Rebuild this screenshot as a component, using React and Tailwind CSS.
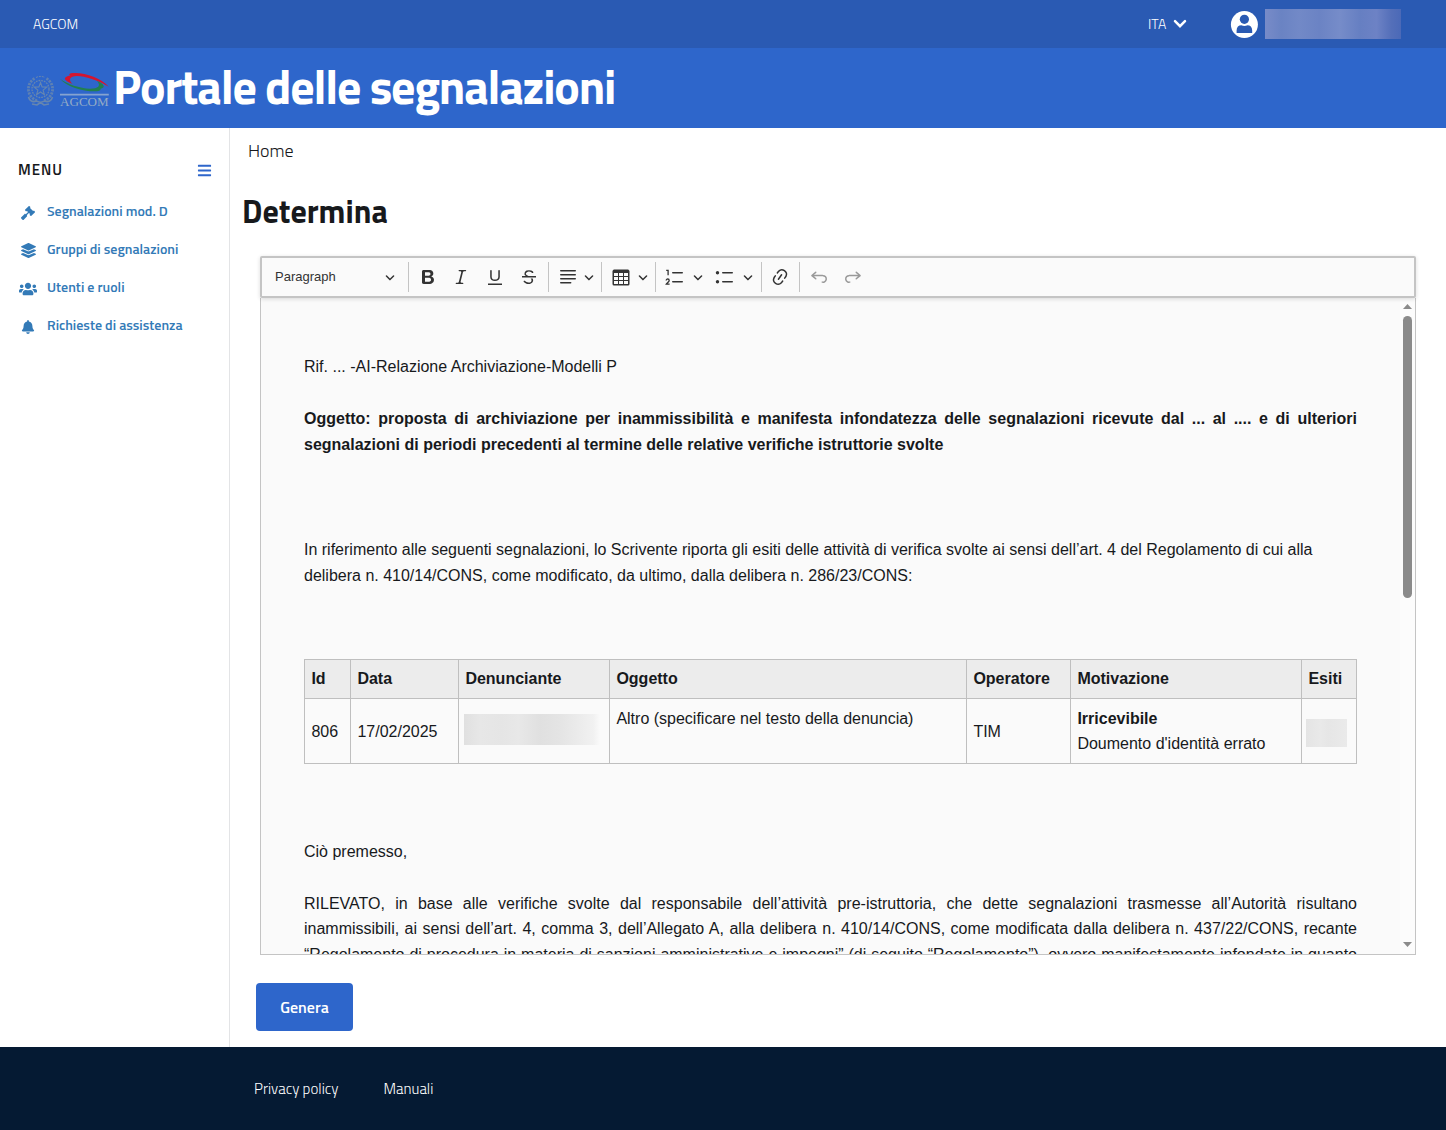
import { FaGavel, FaLayerGroup, FaUsers, FaBell, FaBars } from "react-icons/fa";

const Icon = ({ d, className = "", size = 20, children }) => (
  <svg viewBox={`0 0 ${size} ${size}`} width={size} height={size} fill="currentColor" className={`block shrink-0 ${className}`}>
    {d && <path d={d} />}
    {children}
  </svg>
);

const Arrow = ({ className }) => (
  <Icon
    size={10}
    className={className}
    d="M.941 4.523a.75.75 0 1 1 1.06-1.06l3.006 3.005 3.005-3.005a.75.75 0 1 1 1.06 1.06l-3.549 3.55a.75.75 0 0 1-1.168-.136z"
  />
);

const Sep = ({ className }) => <div className={`h-[30px] w-px shrink-0 bg-[#c4c4c4] ${className}`} />;

const bold =
  "M10.187 17H5.773c-.637 0-1.092-.138-1.364-.415-.273-.277-.409-.718-.409-1.323V4.738c0-.617.14-1.062.419-1.332.279-.27.73-.406 1.354-.406h4.68c.69 0 1.288.041 1.793.124.506.083.96.242 1.36.478.341.197.644.447.906.75a3.262 3.262 0 0 1 .808 2.162c0 1.401-.722 2.426-2.167 3.075C15.05 10.175 16 11.315 16 13.01a3.756 3.756 0 0 1-2.296 3.504 6.1 6.1 0 0 1-1.517.377c-.571.073-1.238.11-2 .11zm-.217-6.217H7v4.087h3.069c1.977 0 2.965-.69 2.965-2.072 0-.707-.256-1.22-.768-1.537-.512-.319-1.277-.478-2.296-.478zM7 5.13v3.619h2.606c.729 0 1.292-.067 1.69-.2a1.6 1.6 0 0 0 .91-.765c.165-.267.247-.566.247-.897 0-.707-.26-1.176-.778-1.409-.519-.232-1.31-.348-2.375-.348H7z";
const italic =
  "m9.586 14.633.021.004c-.036.335.095.655.393.962.082.083.173.15.274.201h1.474a.6.6 0 1 1 0 1.2H5.304a.6.6 0 0 1 0-1.2h1.15c.474-.07.809-.182 1.005-.334.157-.122.291-.32.404-.597l2.416-9.55a1.053 1.053 0 0 0-.281-.823 1.12 1.12 0 0 0-.442-.296H8.15a.6.6 0 0 1 0-1.2h6.443a.6.6 0 1 1 0 1.2h-1.195c-.376.056-.65.155-.823.296-.215.175-.423.439-.623.79l-2.366 9.347z";
const underline =
  "M3 18v-1.5h14V18zm2.2-8V3.6c0-.4.4-.6.8-.6.3 0 .7.2.7.6v6.2c0 2 1.3 2.8 3.2 2.8 1.9 0 3.4-.9 3.4-2.9V3.6c0-.3.4-.5.8-.5.3 0 .7.2.7.5V10c0 2.7-2.2 4-4.9 4-2.6 0-4.7-1.2-4.7-4z";
const strike =
  "M7 16.4c-.8-.4-1.5-.9-2.2-1.5a.6.6 0 0 1-.2-.5l.3-.6h1c1 1.2 2.1 1.7 3.7 1.7 1 0 1.8-.3 2.3-.6.6-.4.6-1.2.6-1.3.2-1.2-.9-2.1-.9-2.1h2.1c.3.7.4 1.2.4 1.7v.8l-.6 1.2c-.6.8-1.1 1-1.6 1.2a6 6 0 0 1-2.4.6c-1 0-1.8-.3-2.5-.6zM6.8 9 6 8.3c-.4-.5-.5-.8-.5-1.6 0-.7.1-1.3.5-1.8.4-.6 1-1 1.6-1.3a6.3 6.3 0 0 1 4.7 0 4 4 0 0 1 1.7 1l.3.7c0 .1.2.4-.2.7-.4.2-.9.1-1 0a3 3 0 0 0-1.2-1c-.4-.2-1-.3-2-.4-.7 0-1.4.2-2 .6-.8.6-1 .8-1 1.5 0 .8.5 1 1.2 1.5.6.4 1.1.7 1.9 1H6.8zM3 10.5V9h14v1.5z";
const align =
  "M2 3.75c0 .414.336.75.75.75h14.5a.75.75 0 1 0 0-1.5H2.75a.75.75 0 0 0-.75.75zm0 4c0 .414.336.75.75.75h14.5a.75.75 0 1 0 0-1.5H2.75a.75.75 0 0 0-.75.75zm0 4c0 .414.336.75.75.75h14.5a.75.75 0 1 0 0-1.5H2.75a.75.75 0 0 0-.75.75zm0 4c0 .414.336.75.75.75h9.929a.75.75 0 1 0 0-1.5H2.75a.75.75 0 0 0-.75.75z";
const tableIcon =
  "M3 6v3h4V6H3zm0 4v3h4v-3H3zm0 4v3h4v-3H3zm5 3h4v-3H8v3zm5 0h4v-3h-4v3zm4-4v-3h-4v3h4zm0-4V6h-4v3h4zm1.5 8a1.5 1.5 0 0 1-1.5 1.5H3A1.5 1.5 0 0 1 1.5 17V4c.222-.863 1.068-1.5 2-1.5h13c.932 0 1.778.637 2 1.5v13zM12 13v-3H8v3h4zm0-4V6H8v3h4z";
const lines =
  "M7 5.75c0 .414.336.75.75.75h9.5a.75.75 0 1 0 0-1.5h-9.5a.75.75 0 0 0-.75.75zM7 14.75c0 .414.336.75.75.75h9.5a.75.75 0 1 0 0-1.5h-9.5a.75.75 0 0 0-.75.75z";
const link =
  "m11.077 15 .991-1.416a.75.75 0 1 1 1.229.86l-1.148 1.64a.748.748 0 0 1-.217.206 5.251 5.251 0 0 1-8.503-5.955.741.741 0 0 1 .12-.274l1.147-1.639a.75.75 0 1 1 1.228.86L4.933 10.7l.006.003a3.75 3.75 0 0 0 6.132 4.294l.006.004zm5.494-5.335a.748.748 0 0 1-.12.274l-1.147 1.639a.75.75 0 1 1-1.228-.86l.86-1.23a3.75 3.75 0 0 0-6.144-4.301l-.86 1.229a.75.75 0 0 1-1.229-.86l1.148-1.64a.748.748 0 0 1 .217-.206 5.251 5.251 0 0 1 8.503 5.955zm-4.563-2.532a.75.75 0 0 1 .184 1.045l-3.155 4.505a.75.75 0 1 1-1.229-.86l3.155-4.506a.75.75 0 0 1 1.045-.184z";
const undo =
  "m5.042 9.367 2.189 1.837a.75.75 0 0 1-.965 1.149l-3.788-3.18a.747.747 0 0 1-.21-.284.75.75 0 0 1 .17-.945L6.23 4.762a.75.75 0 1 1 .964 1.15L4.863 7.866h8.917A.75.75 0 0 1 14 7.9a4 4 0 1 1-1.477 7.718l.344-1.489a2.5 2.5 0 1 0 1.094-4.73l.008-.032H5.042z";

function Logo() {
  return (
    <svg width="84" height="38" viewBox="0 0 84 38" className="block shrink-0">
      <g fill="none" stroke="#6686b0">
        <circle cx="13.5" cy="18" r="8.500" strokeWidth="1.300" strokeDasharray="1.800 .9" />
        <path d="M10 29.500A12 12 0 0 1 8 7.300M17 29.500A12 12 0 0 0 19 7.300" strokeWidth="2.800" strokeDasharray="2.200 1" opacity=".85" />
        <path d="M9 6.500c3-1.500 6-1.500 9 0" strokeWidth="1" strokeDasharray="2 1" />
        <path d="m13.500 11.500 1.600 4.400 4.800.2-3.800 3 1.300 4.500-3.900-2.600-3.900 2.600 1.300-4.500-3.800-3 4.800-.2z" strokeWidth="1.100" />
        <path d="M1.500 26c1 4 4 5.500 8 4l4 1.500 4-1.500c4 1.500 7 0 8-4M5 33l5 1 3.500-2.500L17 34l5-1" strokeWidth="1.600" />
      </g>
      <path d="M45.500 13C36 9.500 35.500 6 43.500 4.600 41.500 3.600 42 2.600 44 2.200 57 .8 73 6.500 81.900 15.700 71 9 58 4.900 50 4.900c-7.500.4-9 3.600-4.500 8.100z" fill="#d4152f" />
      <path d="M33 7.700C40 13 53 17.400 63 17.700c8-.1 11.500-2.700 7-7.700 8.500 3.500 8 7 3.500 7.700.5 1.500-1 2.300-4 2.600C58 21 39.500 16 33 7.700z" fill="#22804f" />
      <path d="M33 23.700h48.800" stroke="#86a3d0" strokeWidth="1.700" />
      <text x="33" y="35.200" textLength="48.700" lengthAdjust="spacingAndGlyphs" fontSize="13.500" fontFamily="Liberation Serif, serif" fill="#94abc6">
        AGCOM
      </text>
    </svg>
  );
}

const menu = [
  [FaGavel, "Segnalazioni mod. D", "size-[14px]"],
  [FaLayerGroup, "Gruppi di segnalazioni", "size-[15px]"],
  [FaUsers, "Utenti e ruoli", "size-[18px]"],
  [FaBell, "Richieste di assistenza", "size-[14px]"],
];

const cell = "border border-[#bfbfbf] px-[6.4px]";

export default function App() {
  return (
    <div className="flex h-[1130px] w-[1446px] flex-col overflow-hidden bg-white font-['Titillium_Web',Roboto,sans-serif] text-[#17191c]">
      <div className="flex h-12 shrink-0 items-center bg-[#2a5ab3] pl-[33px] text-[14px] font-light text-white">
        <span className="w-[1115px] pb-0.5">AGCOM</span>
        <span className="w-[25px] pb-0.5">ITA</span>
        <svg width="14" height="10" viewBox="0 0 14 10" className="block">
          <path d="m2 2.200 5 5 5-5" fill="none" stroke="#fff" strokeWidth="2.500" strokeLinecap="round" />
        </svg>
        <svg width="28" height="28" viewBox="0 0 28 28" className="ml-[43px] mt-px block">
          <circle cx="14.400" cy="13.500" r="13.500" fill="#fff" />
          <circle cx="14.400" cy="8.300" r="4.600" fill="#2a5ab3" />
          <path d="M6.600 22v-2.500c0-3.500 2-5.300 4.700-5.300 2 .9 4.200.9 6.200 0 2.700 0 4.700 1.800 4.700 5.300V22z" fill="#2a5ab3" />
        </svg>
        <div className="ml-[7px] h-[30px] w-[136px] bg-[linear-gradient(90deg,#788bc8_0%,#6a83c3_12%,#7289c7_25%,#6b83c4_40%,#768cc9_55%,#667fc2_70%,#6d82c5_82%,#546fb9_93%,#4b69b7_100%)]" />
      </div>

      <div className="flex h-20 shrink-0 items-center bg-[#2e66cb] pl-[27px]">
        <div className="mt-1"><Logo /></div>
        <h1 className="ml-[2px] whitespace-nowrap pb-0.5 text-[48px] font-bold leading-[78px] tracking-[-1.2px] text-white">
          Portale delle segnalazioni
        </h1>
      </div>

      <div className="flex h-[919px] shrink-0">
        <aside className="w-[230px] shrink-0 border-r border-[#e3e4e6]">
          <div className="mt-[30px] flex h-6 items-center justify-between pl-[18px] pr-[17px]">
            <span className="text-[15px] font-semibold tracking-[1px]">MENU</span>
            <FaBars className="size-[15px] text-[#2e66cb]" />
          </div>
          <nav className="mt-[11px] flex flex-col">
            {menu.map(([I, label, size]) => (
              <a key={label} className="flex h-[38px] items-center pl-[18px] text-[#337ab7]">
                <span className="mt-px flex w-5 justify-center"><I className={size} /></span>
                <span className="ml-[9px] pb-0.5 text-[14px] font-semibold leading-[36px]">{label}</span>
              </a>
            ))}
          </nav>
        </aside>

        <main className="flex flex-1 flex-col items-start">
          <div className="ml-[18px] mt-[11px] h-6 text-[18px] font-light leading-6">Home</div>
          <h2 className="ml-[12px] mt-[28px] h-[41px] text-[32px] font-bold leading-10">Determina</h2>

          <div className="ml-[30px] mt-[24px] flex h-[699px] w-[1156px] flex-col rounded-[2px] font-['Liberation_Sans',Arial,sans-serif]">
            <div className="relative flex h-[42px] shrink-0 items-center rounded-[2px] border-2 border-[#c4c4c4] bg-[#fafafa] pl-[13px] text-[#333] shadow-[0_1px_4px_rgba(0,0,0,0.14)]">
              <span className="w-[110px] text-[13px]">Paragraph</span>
              <Arrow />
              <Sep className="ml-[13px]" />
              <Icon className="ml-[9px]" d={bold} />
              <Icon className="ml-[13px]" d={italic} />
              <Icon className="ml-[14px]" d={underline} />
              <Icon className="ml-[14px]" d={strike} />
              <Sep className="ml-[9px]" />
              <Icon className="ml-[9px]" d={align} />
              <Arrow className="ml-[6px]" />
              <Sep className="ml-[7px]" />
              <Icon className="ml-[9px]" d={tableIcon} />
              <Arrow className="ml-[7px]" />
              <Sep className="ml-[7px]" />
              <Icon className="ml-[9px]" d={lines}>
                <path d="M1.200 3.300h1.900v4.900M1.200 13.500c0-2 3-2 3 .1 0 1.300-2 2.100-2.900 3.600h3.300" fill="none" stroke="currentColor" strokeWidth="1.300" />
              </Icon>
              <Arrow className="ml-[8px]" />
              <Icon className="ml-[12px]" d={lines}>
                <circle cx="2.500" cy="5.750" r="1.700" />
                <circle cx="2.500" cy="14.750" r="1.700" />
              </Icon>
              <Arrow className="ml-[8px]" />
              <Sep className="ml-[8px]" />
              <Icon className="ml-[8px]" d={link} />
              <Sep className="ml-[9px]" />
              <Icon className="ml-[9px] text-[#999]" d={undo} />
              <Icon className="ml-[14px] -scale-x-100 text-[#999]" d={undo} />
            </div>

            <div className="flex min-h-0 flex-1 overflow-hidden border border-t-0 border-[#c4c4c4] bg-[#fafafa]">
              <div className="ml-[43px] w-[1053px] shrink-0 text-[16px] leading-[25.6px]">
                <p className="mt-[55.700px]">Rif. ... -AI-Relazione Archiviazione-Modelli P</p>
                <p className="mt-[26.700px] text-justify font-bold">
                  Oggetto: proposta di archiviazione per inammissibilità e manifesta infondatezza delle segnalazioni ricevute dal ... al .... e di
                  ulteriori segnalazioni di periodi precedenti al termine delle relative verifiche istruttorie svolte
                </p>
                <p className="mt-[80px]">
                  In riferimento alle seguenti segnalazioni, lo Scrivente riporta gli esiti delle attività di verifica svolte ai sensi dell’art. 4 del
                  Regolamento di cui alla delibera n. 410/14/CONS, come modificato, da ultimo, dalla delibera n. 286/23/CONS:
                </p>
                <table className="mt-[70.700px] w-[1053px] table-fixed border-collapse border border-[#b3b3b3] text-left">
                  <colgroup>
                    <col className="w-[46px]" />
                    <col className="w-[108px]" />
                    <col className="w-[151px]" />
                    <col className="w-[357px]" />
                    <col className="w-[104px]" />
                    <col className="w-[231px]" />
                    <col className="w-[55px]" />
                  </colgroup>
                  <thead>
                    <tr className="h-[39px] bg-[#ececec]">
                      {["Id", "Data", "Denunciante", "Oggetto", "Operatore", "Motivazione", "Esiti"].map((h) => (
                        <th key={h} className={cell}>{h}</th>
                      ))}
                    </tr>
                  </thead>
                  <tbody>
                    <tr className="h-[65px]">
                      <td className={`${cell} pt-[2px]`}>806</td>
                      <td className={`${cell} pt-[2px]`}>17/02/2025</td>
                      <td className="border border-[#bfbfbf] pl-[5px]">
                        <div className="-mt-[3px] h-[31px] w-[136px] bg-[linear-gradient(90deg,#e0e0e0_0%,#e7e7e7_12%,#e5e5e5_28%,#e8e8e8_40%,#e0e0e0_56%,#e4e4e4_70%,#eaeaea_82%,#f1f1f1_95%,#fafafa_100%)]" />
                      </td>
                      <td className={`${cell} pt-[7px] align-top`}>Altro (specificare nel testo della denuncia)</td>
                      <td className={`${cell} pt-[2px]`}>TIM</td>
                      <td className={`${cell} leading-[25.2px]`}><b>Irricevibile</b><br />Doumento d'identità errato</td>
                      <td className="border border-[#bfbfbf] pl-1">
                        <div className="mt-[3px] h-7 w-[41px] bg-[linear-gradient(90deg,#e4e4e4,#e9e9e9_35%,#e6e6e6_55%,#eaeaea)]" />
                      </td>
                    </tr>
                  </tbody>
                </table>
                <p className="mt-[74.800px]">Ciò premesso,</p>
                <p className="mt-[26.200px] text-justify [text-align-last:justify]">
                  RILEVATO, in base alle verifiche svolte dal responsabile dell’attività pre-istruttoria, che dette segnalazioni trasmesse all’Autorità
                  risultano inammissibili, ai sensi dell’art. 4, comma 3, dell’Allegato A, alla delibera n. 410/14/CONS, come modificata dalla delibera
                  n. 437/22/CONS, recante “Regolamento di procedura in materia di sanzioni amministrative e impegni” (di seguito “Regolamento”), ovvero manifestamente infondate in quanto
                </p>
              </div>
              <div className="ml-[43px] flex w-[15px] shrink-0 flex-col items-center justify-between bg-[#fcfcfc] pb-[7px] pt-[6px]">
                <div className="flex flex-col items-center gap-[7px]">
                  <svg width="9" height="5" viewBox="0 0 9 5"><path d="M4.500 0 9 5H0z" fill="#8b8b8b" /></svg>
                  <div className="h-[282px] w-[9px] rounded-full bg-[#8b8b8b]" />
                </div>
                <svg width="9" height="5" viewBox="0 0 9 5"><path d="M0 0h9L4.500 5z" fill="#8b8b8b" /></svg>
              </div>
            </div>
          </div>

          <button className="ml-[26px] mt-[28px] h-12 w-[97px] rounded-[4px] bg-[#2e66cb] text-[16px] font-semibold text-white">Genera</button>
        </main>
      </div>

      <footer className="flex flex-1 items-center gap-[45px] bg-[#051a33] pl-[254px] pt-0.5 text-[15px] font-light text-white">
        <a className="w-[84.500px] whitespace-nowrap">Privacy policy</a>
        <a>Manuali</a>
      </footer>
    </div>
  );
}
